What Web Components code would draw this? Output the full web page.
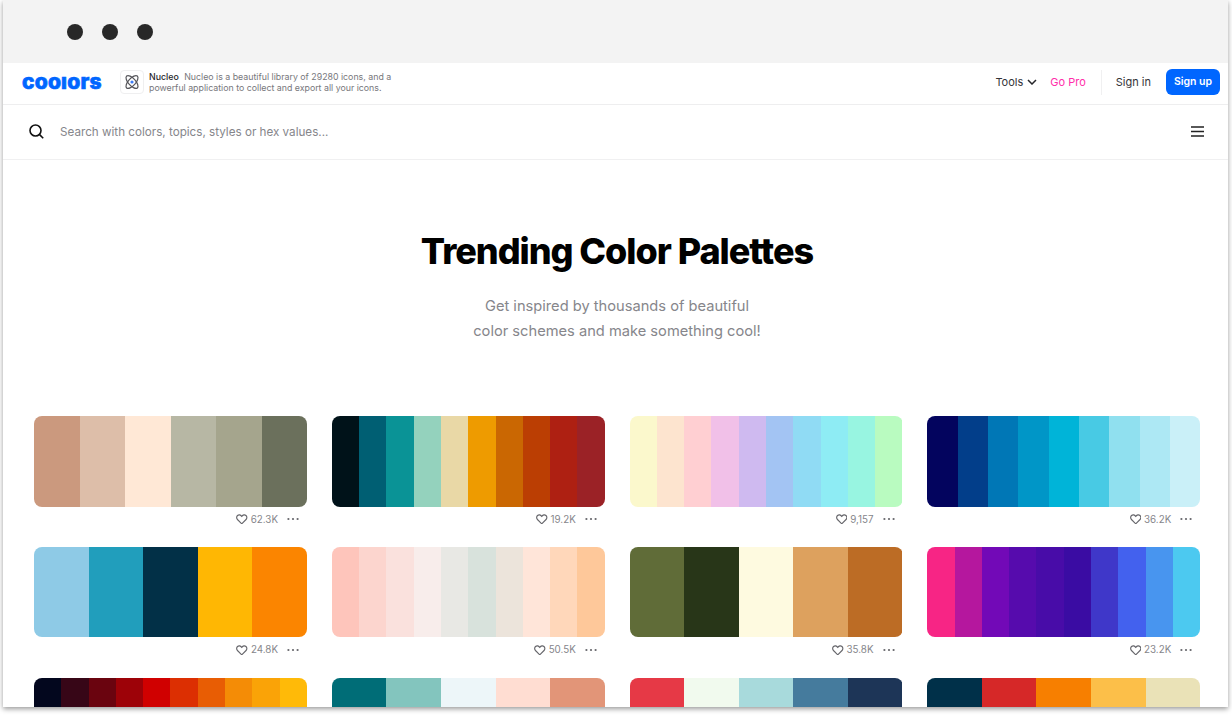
<!DOCTYPE html>
<html>
<head>
<meta charset="utf-8">
<title>Trending Color Palettes</title>
<style>
  html, body { margin: 0; height: 100%; overflow: hidden; background: #fff; }
  body { font-family: Inter, "Liberation Sans", sans-serif; }
</style>
</head>
<body>
<app-window>
  <top-nav></top-nav>
  <search-bar></search-bar>
  <hero-head>
    <span slot="title">Trending Color Palettes</span>
    <span slot="line1">Get inspired by thousands of beautiful</span>
    <span slot="line2">color schemes and make something cool!</span>
  </hero-head>
  <palette-grid>
    <palette-card likes="62.3K" colors="cb997e ddbea9 ffe8d6 b7b7a4 a5a58d 6b705c"></palette-card>
    <palette-card likes="19.2K" colors="001219 005f73 0a9396 94d2bd e9d8a6 ee9b00 ca6702 bb3e03 ae2012 9b2226"></palette-card>
    <palette-card likes="9,157" colors="fbf8cc fde4cf ffcfd2 f1c0e8 cfbaf0 a3c4f3 90dbf4 8eecf4 98f5e1 b9fbc0"></palette-card>
    <palette-card likes="36.2K" colors="03045e 023e8a 0077b6 0096c7 00b4d8 48cae4 90e0ef ade8f4 caf0f8"></palette-card>
    <palette-card likes="24.8K" colors="8ecae6 219ebc 023047 ffb703 fb8500"></palette-card>
    <palette-card likes="50.5K" colors="fec5bb fcd5ce fae1dd f8edeb e8e8e4 d8e2dc ece4db ffe5d9 ffd7ba fec89a"></palette-card>
    <palette-card likes="35.8K" colors="606c38 283618 fefae0 dda15e bc6c25"></palette-card>
    <palette-card likes="23.2K" colors="f72585 b5179e 7209b7 560bad 480ca8 3a0ca3 3f37c9 4361ee 4895ef 4cc9f0"></palette-card>
    <palette-card colors="03071e 370617 6a040f 9d0208 d00000 dc2f02 e85d04 f48c06 faa307 ffba08"></palette-card>
    <palette-card colors="006d77 83c5be edf6f9 ffddd2 e29578"></palette-card>
    <palette-card colors="e63946 f1faee a8dadc 457b9d 1d3557"></palette-card>
    <palette-card colors="003049 d62828 f77f00 fcbf49 eae2b7"></palette-card>
  </palette-grid>
</app-window>

<script>
//Window frame
//
class AppWindow extends HTMLElement {
  constructor() {
    super();
    this.attachShadow({mode: 'open'}).innerHTML = `
      <style>
        :host {
          display: block;
          width: 1225px;
          height: 707px;
          margin-left: 3px;
          background: #fff;
          box-shadow: 0 2px 5px rgba(0,0,0,.4);
          overflow: hidden;
          color: #000;
        }
        .bar {
          display: flex;
          align-items: center;
          gap: 19px;
          height: 63px;
          padding-left: 64px;
          box-sizing: border-box;
          background: #f3f3f3;
        }
        .bar i { width: 16px; height: 16px; border-radius: 50%; background: #282828; }
      </style>
      <div class="bar"><i></i><i></i><i></i></div>
      <slot></slot>
    `;
  }
}
customElements.define('app-window', AppWindow);

//Nav
//
class TopNav extends HTMLElement {
  constructor() {
    super();
    this.attachShadow({mode: 'open'}).innerHTML = `
      <style>
        :host {
          display: flex;
          align-items: center;
          height: 42px;
          box-sizing: border-box;
          padding: 0 8px 3px 18px;
          border-bottom: 1px solid #eeeeef;
          font-family: Inter, "Liberation Sans", sans-serif;
        }
        .logo {
          width: 80px;
          padding-left: 1px;
          margin-right: 18px;
          color: #0066ff;
          font-size: 21px;
          font-weight: 800;
          line-height: 20px;
          letter-spacing: .2px;
          -webkit-text-stroke: .7px #0066ff;
          white-space: nowrap;
        }
        .logo span {
          display: inline-block;
          transform: scaleY(.74);
          transform-origin: 50% 78%;
        }
        .ad-icon {
          display: flex;
          align-items: center;
          justify-content: center;
          width: 22px;
          height: 22px;
          margin-right: 5px;
          border: 1px solid #efeff0;
          border-radius: 4px;
        }
        .ad {
          font-size: 8.8px;
          line-height: 11px;
          color: #77777c;
        }
        .ad b { font-weight: 500; color: #26262a; margin-right: 3px; }
        .links {
          display: flex;
          align-items: center;
          margin-left: auto;
          font-size: 11px;
          color: #333338;
        }
        .tools { display: flex; align-items: center; gap: 4px; margin-right: 13px; }
        .pro { color: #ff2eaa; }
        .sep { width: 1px; height: 25px; margin: 0 14px 0 15px; background: #f0f0f1; }
        .btn {
          margin-left: 15px;
          width: 54px;
          height: 26px;
          line-height: 26px;
          text-align: center;
          border-radius: 6px;
          background: #0066ff;
          color: #fff;
          font-size: 10.5px;
          font-weight: 600;
        }
      </style>
      <div class="logo">coo<span>l</span>ors</div>
      <div class="ad-icon">
        <svg width="18" height="18" viewBox="0 0 18 18" fill="none" stroke="#55555a" stroke-width="1.2">
          <ellipse cx="9" cy="9" rx="3.6" ry="8" transform="rotate(-42 9 9)"/>
          <ellipse cx="9" cy="9" rx="3.6" ry="8" transform="rotate(42 9 9)"/>
          <circle cx="9" cy="9" r="1.6" fill="#3d7cf5" stroke="none"/>
        </svg>
      </div>
      <div class="ad"><b>Nucleo</b> Nucleo is a beautiful library of 29280 icons, and a<br>powerful application to collect and export all your icons.</div>
      <div class="links">
        <div class="tools">Tools
          <svg width="10" height="6" viewBox="0 0 10 6" fill="none" stroke="#26262a" stroke-width="1.5"><path d="M1 1l4 4 4-4"/></svg>
        </div>
        <div class="pro">Go Pro</div>
        <div class="sep"></div>
        <div>Sign in</div>
        <div class="btn">Sign up</div>
      </div>
    `;
  }
}
customElements.define('top-nav', TopNav);

//Search row
//
class SearchBar extends HTMLElement {
  constructor() {
    super();
    this.attachShadow({mode: 'open'}).innerHTML = `
      <style>
        :host {
          display: flex;
          align-items: center;
          height: 55px;
          box-sizing: border-box;
          padding: 0 24px 1px 26px;
          border-bottom: 1px solid #f0f0f1;
          font-family: Inter, "Liberation Sans", sans-serif;
        }
        span { margin-left: 16px; font-size: 11.66px; color: #86868b; }
        svg.menu { margin-left: auto; }
      </style>
      <svg width="15" height="15" viewBox="0 0 15 15" fill="none" stroke="#111" stroke-width="1.6">
        <circle cx="6.5" cy="6.5" r="5.5"/><path d="M10.6 10.6l3.6 3.6"/>
      </svg>
      <span>Search with colors, topics, styles or hex values...</span>
      <svg class="menu" width="13" height="11" viewBox="0 0 13 11" stroke="#222" stroke-width="1.5"><path d="M0 1h13M0 5.5h13M0 10h13"/></svg>
    `;
  }
}
customElements.define('search-bar', SearchBar);

//Heading block
//
class HeroHead extends HTMLElement {
  constructor() {
    super();
    this.attachShadow({mode: 'open'}).innerHTML = `
      <style>
        :host {
          display: block;
          padding: 69px 28px 0 31px;
          height: 255.95px;
          box-sizing: border-box;
          text-align: center;
          font-family: Inter, "Liberation Sans", sans-serif;
        }
        .title {
          font-size: 36px;
          line-height: 44px;
          font-weight: 800;
          letter-spacing: -1.04px;
          color: #000;
        }
        .sub {
          margin-top: 21px;
          font-size: 14.67px;
          line-height: 25px;
          color: #86868b;
        }
      </style>
      <div class="title"><slot name="title"></slot></div>
      <div class="sub"><slot name="line1"></slot><br><slot name="line2"></slot></div>
    `;
  }
}
customElements.define('hero-head', HeroHead);

//Grid
//
class PaletteGrid extends HTMLElement {
  constructor() {
    super();
    this.attachShadow({mode: 'open'}).innerHTML = `
      <style>
        :host {
          display: grid;
          grid-template-columns: repeat(4, 273px);
          column-gap: 24.75px;
          padding-left: 31px;
        }
      </style>
      <slot></slot>
    `;
  }
}
customElements.define('palette-grid', PaletteGrid);

//Card
//
const cardTmpl = document.createElement('template');
cardTmpl.innerHTML = `
  <style>
    :host {
      display: block;
      height: 130.9px;
      min-width: 0;
      font-family: Inter, "Liberation Sans", sans-serif;
    }
    .colors {
      display: flex;
      height: 90.6px;
      border-radius: 8px;
      overflow: hidden;
    }
    .colors div { flex: 1; }
    .meta {
      display: flex;
      align-items: center;
      justify-content: flex-end;
      height: 25px;
      padding-right: 8px;
      font-size: 9.8px;
      color: #86868b;
    }
    .likes { margin-left: 3px; }
    .dots { margin-left: 9px; }
  </style>
  <div class="colors"></div>
  <div class="meta">
    <svg width="11.500" height="10.500" viewBox="0 0 24 22" fill="none" stroke="#66666b" stroke-width="2.4">
      <path d="M12 20.5L3 11.5C.6 9 .8 5.200 3.200 3.100 5.600 1 9.400 1.400 12 5c2.600-3.600 6.400-4 8.800-1.900 2.400 2.100 2.600 5.900.2 8.400z"/>
    </svg>
    <span class="likes"></span>
    <svg class="dots" width="12" height="4" viewBox="0 0 12 4" fill="#66666b">
      <circle cx="1.400" cy="2" r="1.100"/><circle cx="6" cy="2" r="1.100"/><circle cx="10.600" cy="2" r="1.100"/>
    </svg>
  </div>
`;

class PaletteCard extends HTMLElement {
  constructor() {
    super();
    this.attachShadow({mode: 'open'}).appendChild(cardTmpl.content.cloneNode(true));
  }

  connectedCallback() {
    const box = this.shadowRoot.querySelector('.colors');
    this.getAttribute('colors').split(' ').forEach(c => {
      const d = document.createElement('div');
      d.style.background = '#' + c;
      box.appendChild(d);
    });
    // the last row is cut by the window, so it has no likes row
    if (this.hasAttribute('likes')) {
      this.shadowRoot.querySelector('.likes').textContent = this.getAttribute('likes');
    } else {
      this.shadowRoot.querySelector('.meta').remove();
    }
  }
}
customElements.define('palette-card', PaletteCard);
</script>
</body>
</html>
